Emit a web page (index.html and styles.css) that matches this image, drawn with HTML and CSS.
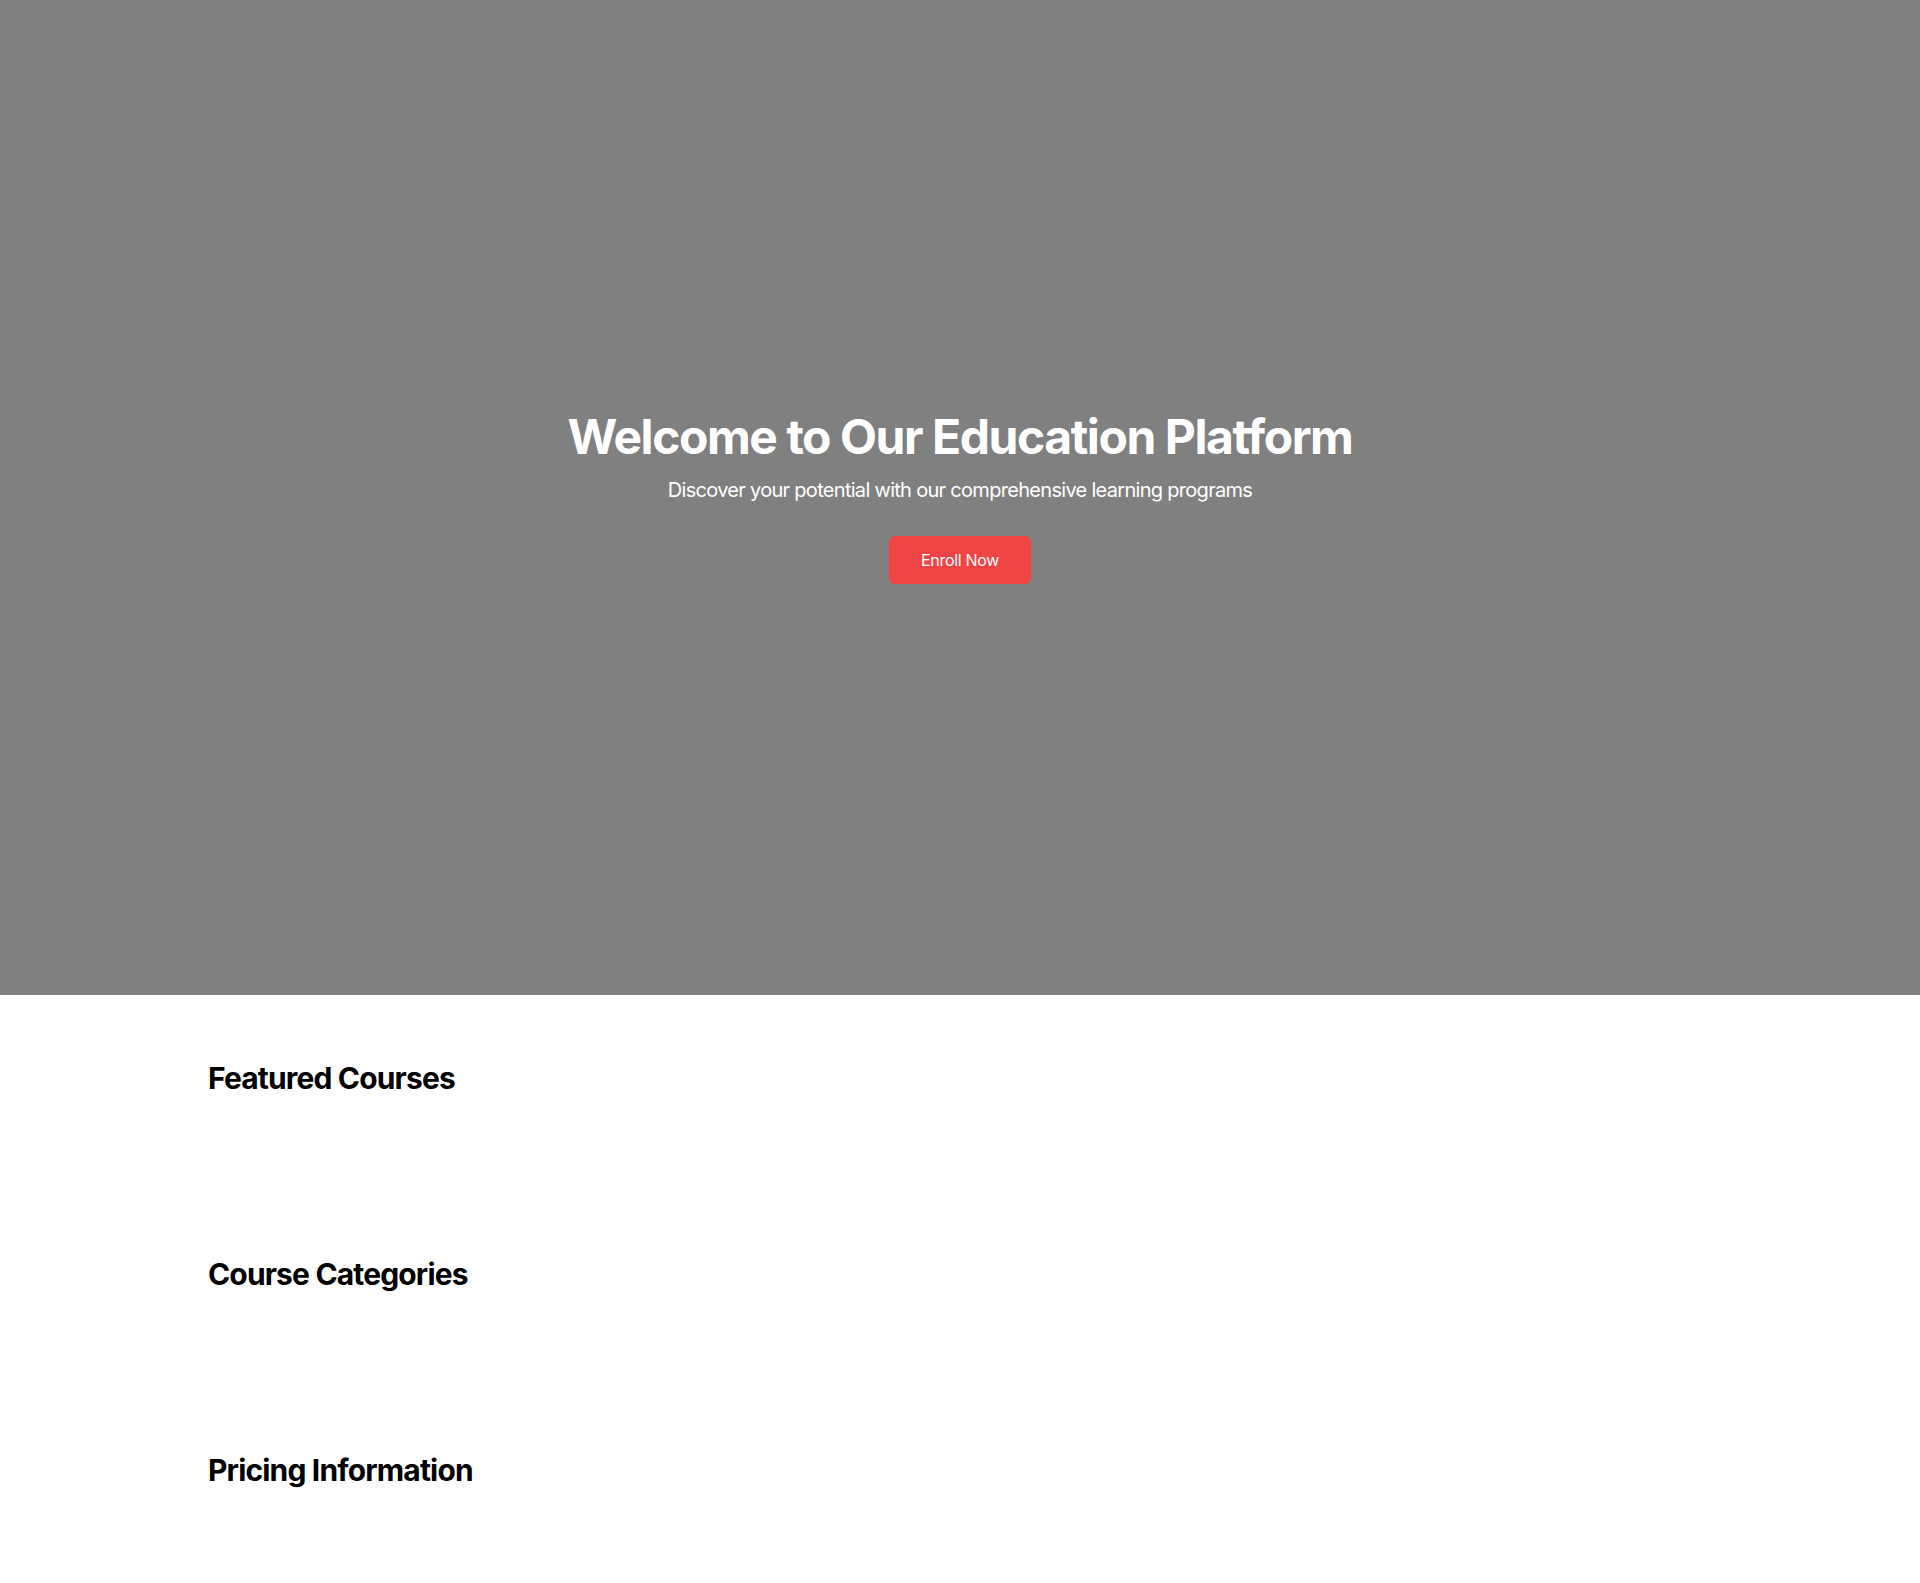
FILE: index.html
```html
<!DOCTYPE html>
<html lang="en">
<head>
<meta charset="utf-8">
<title>Education Platform</title>
<link rel="stylesheet" href="styles.css">
</head>
<body>
<section class="hero">
  <div class="hero-content">
    <h1 class="hero-title">Welcome to Our Education Platform</h1>
    <p class="hero-subtitle">Discover your potential with our comprehensive learning programs</p>
    <button class="enroll-btn">Enroll Now</button>
  </div>
</section>
<section class="section">
  <div class="container">
    <h2 class="section-title">Featured Courses</h2>
  </div>
</section>
<section class="section">
  <div class="container">
    <h2 class="section-title">Course Categories</h2>
  </div>
</section>
<section class="section">
  <div class="container">
    <h2 class="section-title">Pricing Information</h2>
  </div>
</section>
</body>
</html>
```

FILE: styles.css
```css
* { box-sizing: border-box; }
html, body { margin: 0; padding: 0; }
body {
  font-family: Inter, "Liberation Sans", sans-serif;
  color: #000;
  background: #fff;
}
.hero {
  height: 995px;
  background: #808080;
  display: flex;
  align-items: center;
  justify-content: center;
  text-align: center;
  color: #fff;
}
.hero-content {
  display: flex;
  flex-direction: column;
  align-items: center;
  padding-top: 2px;
}
.hero-title {
  margin: 0 0 15px;
  font-size: 48px;
  line-height: 48px;
  font-weight: 700;
  letter-spacing: -0.03em;
}
.hero-subtitle {
  margin: 0 0 32px;
  font-size: 20px;
  line-height: 28px;
  letter-spacing: -0.035em;
}
.enroll-btn {
  background: #ef4444;
  color: #fff;
  border: none;
  border-radius: 6px;
  padding: 12px 32px;
  font-family: Inter, "Liberation Sans", sans-serif;
  font-size: 16px;
  line-height: 24px;
  letter-spacing: -0.02em;
  width: 142px;
  cursor: pointer;
}
.section {
  padding: 64px 0;
}
.container {
  max-width: 1536px;
  margin: 0 auto;
  padding: 0 16px;
}
.section-title {
  margin: 0 0 32px;
  padding-top: 2px;
  font-size: 30px;
  line-height: 34px;
  font-weight: 700;
  letter-spacing: -0.028em;
}
```
